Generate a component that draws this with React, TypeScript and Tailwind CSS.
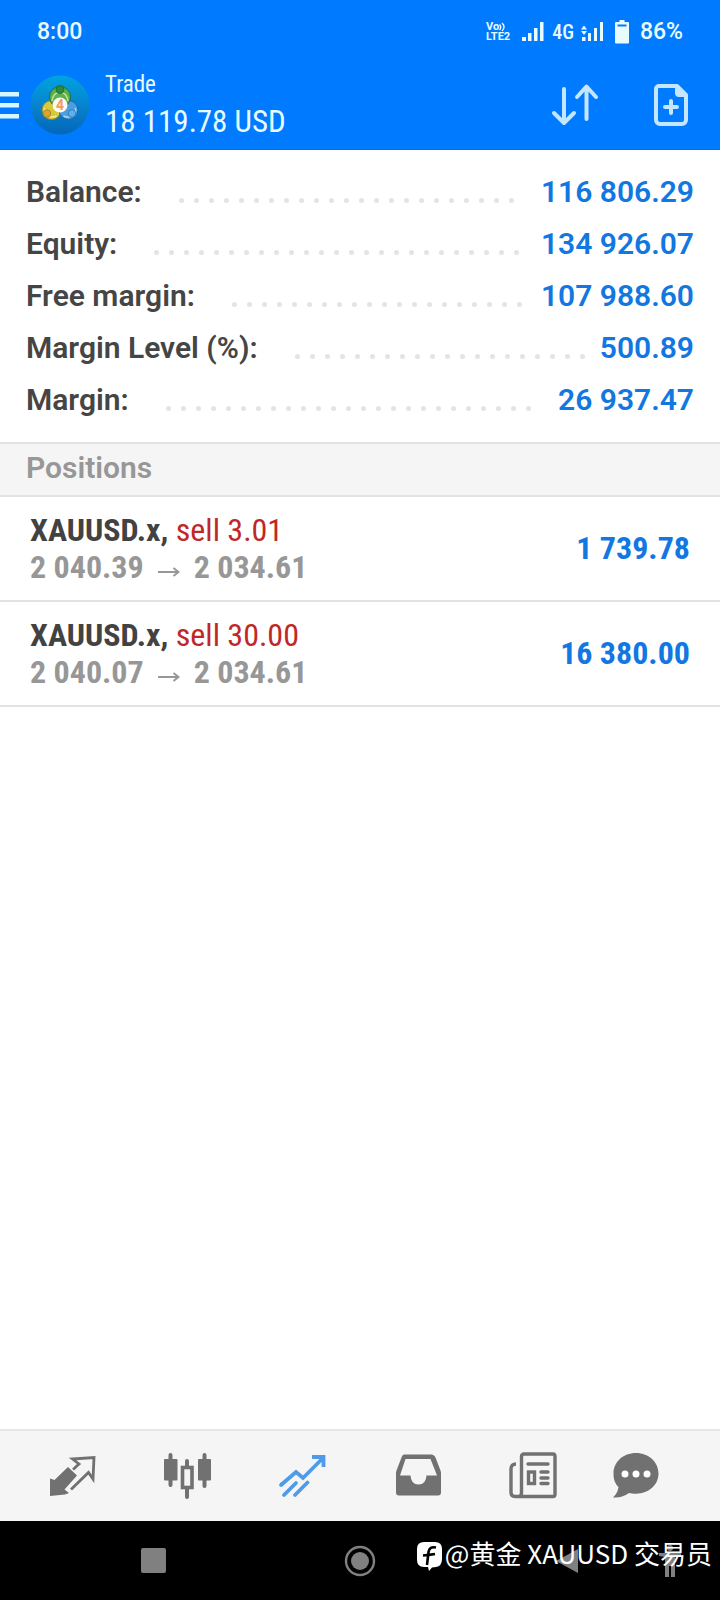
import type { ReactNode } from "react";

type Metric = { label: string; value: string };
type Position = { id: number; symbol: string; side: string; open: string; current: string; profit: string };

const metrics: Metric[] = [
  { label: "Balance:", value: "116 806.29" },
  { label: "Equity:", value: "134 926.07" },
  { label: "Free margin:", value: "107 988.60" },
  { label: "Margin Level (%):", value: "500.89" },
  { label: "Margin:", value: "26 937.47" },
];

const positions: Position[] = [
  { id: 1, symbol: "XAUUSD.x,", side: "sell 3.01", open: "2 040.39", current: "2 034.61", profit: "1 739.78" },
  { id: 2, symbol: "XAUUSD.x,", side: "sell 30.00", open: "2 040.07", current: "2 034.61", profit: "16 380.00" },
];

const dots = Array.from({ length: 48 }, (_, i) => i);

function StatusBar() {
  return (
    <div className="flex h-[60px] items-center justify-between px-[37px] pt-[3px] text-[23px] leading-[28px] font-medium text-[#e8fbff]">
      <span>8:00</span>
      <div className="flex items-center">
        <div className="flex flex-col text-[11px] leading-[10px] font-bold">
          <span className="flex items-center">
            Vo
            <svg width="8" height="10" viewBox="0 0 8 10" fill="none" stroke="currentColor" strokeWidth="1.4" aria-hidden="true">
              <path d="M0.5 2.5 Q3 5 0.5 8 M3 1 Q7 5 3 9" />
            </svg>
          </span>
          <span>LTE2</span>
        </div>
        <svg className="ml-[12px]" width="22" height="20" viewBox="0 0 22 20" fill="currentColor" aria-hidden="true">
          <path d="M0 15h4v4H0zM6 11h3.500v8H6zM12 6h3.500v13H12zM18 0h3.500v19H18z" />
        </svg>
        <span className="ml-[8px] font-['Roboto_Condensed'] text-[20px]">4G</span>
        <svg className="ml-[7px]" width="22" height="20" viewBox="0 0 22 20" fill="currentColor" aria-hidden="true">
          <path d="M3 3.500l3 4H0zM0 9h6l-3 4zM1 15h3.500v4H1zM7 11h3v8H7zM13 6h3v13h-3zM19 0h3v19h-3z" />
        </svg>
        <svg className="ml-[12px]" width="14" height="24" viewBox="0 0 14 24" fill="currentColor" aria-hidden="true">
          <path d="M4.500 0h5v2H13a1 1 0 0 1 1 1v19.500a1 1 0 0 1-1 1H1a1 1 0 0 1-1-1V3a1 1 0 0 1 1-1h3.500zM2.500 4.500v2h9v-2z" fillRule="evenodd" />
        </svg>
        <span className="ml-[11px]">86%</span>
      </div>
    </div>
  );
}

function AppLogo() {
  return (
    <svg width="60" height="60" viewBox="0 0 60 60" role="img" aria-label="MetaTrader 4">
      <defs>
        <linearGradient id="disc" x1="0" y1="0" x2="0" y2="1">
          <stop offset="0" stopColor="#00a3e0" />
          <stop offset="0.5" stopColor="#0784cf" />
          <stop offset="1" stopColor="#0566b8" />
        </linearGradient>
      </defs>
      <circle cx="30" cy="30" r="29.500" fill="url(#disc)" />
      <circle cx="21.500" cy="35" r="9.500" fill="#d9c93a" stroke="#8c8a2a" strokeWidth="1" />
      <circle cx="38.500" cy="35" r="9.500" fill="#4b9fe0" stroke="#1f62a8" strokeWidth="1" />
      <circle cx="30" cy="22" r="10.500" fill="#5cb04e" stroke="#25713b" strokeWidth="1" />
      <path d="M22 26q1 -8 8 -9q7 1 8 9" fill="none" stroke="#bfe3a0" strokeWidth="1.500" />
      <path d="M14.500 33q-1 6 4 8q4 2 8 0" fill="none" stroke="#f6eb8a" strokeWidth="1.500" />
      <path d="M45.500 33q1 6 -4 8q-4 2 -8 0" fill="none" stroke="#a6d8f8" strokeWidth="1.500" />
      <circle cx="30" cy="14.500" r="4" fill="#2f8a3c" stroke="#1d6434" strokeWidth="0.800" />
      <circle cx="17" cy="38.500" r="3.800" fill="#d9a52c" stroke="#a17d1e" strokeWidth="0.800" />
      <circle cx="42" cy="38.500" r="3.800" fill="#5eb0ea" stroke="#2a6fb4" strokeWidth="0.800" />
      <circle cx="30" cy="30" r="7.500" fill="#fdfaf2" />
      <text x="30" y="35" textAnchor="middle" fontSize="14" fontWeight="700" fontFamily="Roboto, sans-serif" fill="#ee9a63">
        4
      </text>
    </svg>
  );
}

function AppBar() {
  return (
    <div className="flex h-[90px] items-center border-b border-[#1a6fc4] pr-[32px]">
      <button type="button" aria-label="Menu" className="text-[#d8f6ff]">
        <svg width="19" height="28" viewBox="0 0 19 28" fill="currentColor" aria-hidden="true">
          <path d="M0 1h19v4.500H0zM0 12h19v4.500H0zM0 23h19v4.500H0z" />
        </svg>
      </button>
      <div className="ml-[11px]">
        <AppLogo />
      </div>
      <div className="ml-[15px] flex-1 pt-[4px] font-['Roboto_Condensed'] text-[#e8fbff]">
        <h1 className="text-[23px] leading-[30px]">Trade</h1>
        <p className="text-[31px] leading-[44px]">18 119.78 USD</p>
      </div>
      <button type="button" aria-label="Sort positions" className="text-[#c4e6ff]">
        <svg width="48" height="44" viewBox="0 0 48 44" fill="none" stroke="currentColor" strokeWidth="4" strokeLinecap="round" strokeLinejoin="round" aria-hidden="true">
          <path d="M13 6v34M3 30l10 10 10-10M35.500 36V4M26 14L35.500 3.500 45 14" />
        </svg>
      </button>
      <button type="button" aria-label="New order" className="ml-[55px] text-[#c4e6ff]">
        <svg width="34" height="42" viewBox="0 0 34 42" aria-hidden="true">
          <path d="M4 2h19l9 9v25a4 4 0 0 1-4 4H6a4 4 0 0 1-4-4V5a3 3 0 0 1 3-3z" fill="none" stroke="currentColor" strokeWidth="4" strokeLinejoin="round" />
          <path d="M21 2v7a4 4 0 0 0 4 4h8v-3L24 1z" fill="currentColor" />
          <path d="M17 17v12M11 23h12" fill="none" stroke="currentColor" strokeWidth="4" strokeLinecap="round" />
        </svg>
      </button>
    </div>
  );
}

function MetricRow({ label, value }: Metric) {
  return (
    <div className="flex h-[52px] items-center text-[30px] leading-[36px] font-semibold">
      <dt className="text-[#454545]">{label}</dt>
      <div aria-hidden="true" className="mt-[16px] mr-[10px] ml-[32px] flex h-[5px] flex-1 flex-wrap overflow-hidden">
        {dots.map((i) => (
          <span key={i} className="flex h-[6px] w-[15px] items-start justify-center">
            <span className="size-[5px] rounded-full bg-[#e4e4e4]" />
          </span>
        ))}
      </div>
      <dd className="text-[#1277e1]">{value}</dd>
    </div>
  );
}

function PositionRow({ symbol, side, open, current, profit }: Position) {
  return (
    <li className="flex h-[105px] items-center justify-between border-b-2 border-[#e2e2e2] px-[30px] font-['Roboto_Condensed'] text-[32px] leading-[37px] font-bold">
      <div>
        <p className="text-[#424242]">
          {symbol} <span className="font-normal text-[#c02828]">{side}</span>
        </p>
        <p className="flex items-center text-[#979797]">
          <span>{open}</span>
          <svg className="mx-[14px] mt-[9px]" width="22" height="12" viewBox="0 0 22 12" fill="none" stroke="currentColor" strokeWidth="2" role="img" aria-label="to">
            <path d="M0 6h20" />
            <path d="M15.500 2l5 4-5 4" />
          </svg>
          <span>{current}</span>
        </p>
      </div>
      <p className="text-[#1277e1]">{profit}</p>
    </li>
  );
}

function Tab({ label, active, last, children }: { label: string; active?: boolean; last?: boolean; children: ReactNode }) {
  return (
    <button
      type="button"
      aria-label={label}
      aria-current={active ? "page" : undefined}
      className={`flex h-full items-center justify-center ${last ? "w-[12.5%]" : "w-[16%]"} ${active ? "text-[#4e9bea]" : "text-[#717171]"}`}
    >
      <svg width="48" height="48" viewBox="0 0 48 48" fill="none" stroke="currentColor" aria-hidden="true">
        {children}
      </svg>
    </button>
  );
}

function TabBar() {
  return (
    <nav aria-label="Sections" className="flex h-[92px] items-center border-t-2 border-[#e6e6e6] bg-[#f5f5f5]">
      <span className="w-[2%]" />
      <Tab label="Quotes">
        <path d="M2 26.500l4.500 1.500L20 15l9 8.500L16.500 37.500l4.500 3.500-4 1.500-15 1.500z" fill="currentColor" stroke="none" />
        <path d="M27 15.500L31 12l-6.500-5L46 5.500 45 27l-4.500-6.500L23 37.500M25 17.500l3-2.500" strokeWidth="2.800" />
      </Tab>
      <Tab label="Charts">
        <path d="M7.500 3v30M24 9v36M41.500 3v31" strokeWidth="4" strokeLinecap="round" />
        <rect x="1" y="7" width="13.500" height="21.500" rx="1" fill="currentColor" stroke="none" />
        <rect x="35" y="7" width="13" height="21.500" rx="1" fill="currentColor" stroke="none" />
        <rect x="19.500" y="15.500" width="9.500" height="20" fill="#f5f5f5" strokeWidth="3.600" />
      </Tab>
      <Tab label="Trade" active>
        <path d="M3 33L18 20l7 6L44 7M34 5h11.500v10" strokeWidth="3.800" />
        <path d="M3 33l1-1M6 43l12-12M17 43l12.500-12.500" strokeWidth="3.800" strokeLinecap="round" />
      </Tab>
      <Tab label="History">
        <path d="M10 2.500h27q3 0 4.500 3l5 13q.500 1.500.500 3v19q0 3-3 3H5q-3 0-3-3v-19q0-1.500.500-3l5-13q1-3 2.500-3zM11.500 7L6 23.500h10.500q.500 9 8 9t8-9H43L36.500 7z" fill="currentColor" fillRule="evenodd" stroke="none" />
      </Tab>
      <Tab label="News">
        <path d="M12.500 4.500q0-2.500 2.500-2.500h29q2 0 2 2.500v38q0 2-2 2H6q-4 0-4-4V17q0-5 5-5M12.500 4.500v36q0 4-3 4" strokeWidth="3.400" />
        <path d="M19 12h20M32 20h7M32 26h7M32 31.500h7" strokeWidth="3.400" strokeLinecap="round" />
        <rect x="19.500" y="20" width="6" height="11.500" strokeWidth="3.400" />
      </Tab>
      <Tab label="Messages" last>
        <path d="M25 1C12 1 2.500 10 2.500 21.500c0 6 1.500 10 5 13.500-.500 4-2 7-5.500 10.500 7 .500 12-1.500 16-4.500 2 .500 4 .700 7 .700 13 0 22.500-9 22.500-20.200S38 1 25 1z" fill="currentColor" stroke="none" />
        <circle cx="14" cy="22" r="3.500" fill="#fff" stroke="none" />
        <circle cx="25" cy="22" r="3.500" fill="#fff" stroke="none" />
        <circle cx="36" cy="22" r="3.500" fill="#fff" stroke="none" />
      </Tab>
    </nav>
  );
}

function SystemBar() {
  return (
    <div className="relative flex h-[79px] items-center bg-black text-[#808080]">
      <span className="w-[7%]" />
      <button type="button" aria-label="Recent apps" className="flex w-[28.7%] justify-center">
        <span className="size-[25px] rounded-xs bg-current" />
      </button>
      <button type="button" aria-label="Home" className="flex w-[28.7%] justify-center">
        <svg width="32" height="32" viewBox="0 0 32 32" aria-hidden="true">
          <circle cx="16" cy="16" r="14" fill="none" stroke="currentColor" strokeWidth="2.400" />
          <circle cx="16" cy="16" r="9" fill="currentColor" />
        </svg>
      </button>
      <button type="button" aria-label="Back" className="flex w-[28.7%] justify-center">
        <svg width="24" height="26" viewBox="0 0 24 26" aria-hidden="true">
          <path d="M23 1v24L1 13z" fill="currentColor" />
        </svg>
      </button>
      <button type="button" aria-label="Accessibility" className="-ml-[16px]">
        <svg width="32" height="34" viewBox="0 0 32 34" fill="currentColor" aria-hidden="true">
          <circle cx="16" cy="4" r="3" />
          <path d="M5 9h22v3l-6 1v20h-4V22h-2v11h-4V13l-6-1z" />
        </svg>
      </button>
      <div className="absolute top-[14px] right-[8px] flex items-start gap-[3px] whitespace-nowrap text-white">
        <svg className="mt-[7px]" width="25" height="29" viewBox="0 0 25 29" aria-hidden="true">
          <path d="M7 0h11q7 0 7 7v10q0 7-6 8l-4 .500L12 29l-1-4H7q-7 0-7-7V7q0-7 7-7z" fill="#fff" />
          <path d="M19 5.500q-6.500-1.500-7.500 4.500L10 23M6 13.500q6-.500 12-1.500" fill="none" stroke="#000" strokeWidth="2.600" />
        </svg>
        <p className="font-['Noto_Sans_CJK_SC',sans-serif] text-[26px] leading-[36px]">@黄金 XAUUSD 交易员</p>
      </div>
    </div>
  );
}

export default function App() {
  return (
    <div className="flex min-h-screen flex-col bg-white font-['Roboto',sans-serif]">
      <header className="bg-[#007bff]">
        <StatusBar />
        <AppBar />
      </header>
      <main className="flex-1">
        <dl className="px-[26px] pt-[16px] pb-[16px]">
          {metrics.map((m) => (
            <MetricRow key={m.label} {...m} />
          ))}
        </dl>
        <h2 className="h-[55px] border-y-2 border-[#e2e2e2] bg-[#f5f5f5] px-[26px] pt-[6px] text-[30px] leading-[36px] font-semibold text-[#979797]">
          Positions
        </h2>
        <ul>
          {positions.map((p) => (
            <PositionRow key={p.id} {...p} />
          ))}
        </ul>
      </main>
      <TabBar />
      <SystemBar />
    </div>
  );
}
